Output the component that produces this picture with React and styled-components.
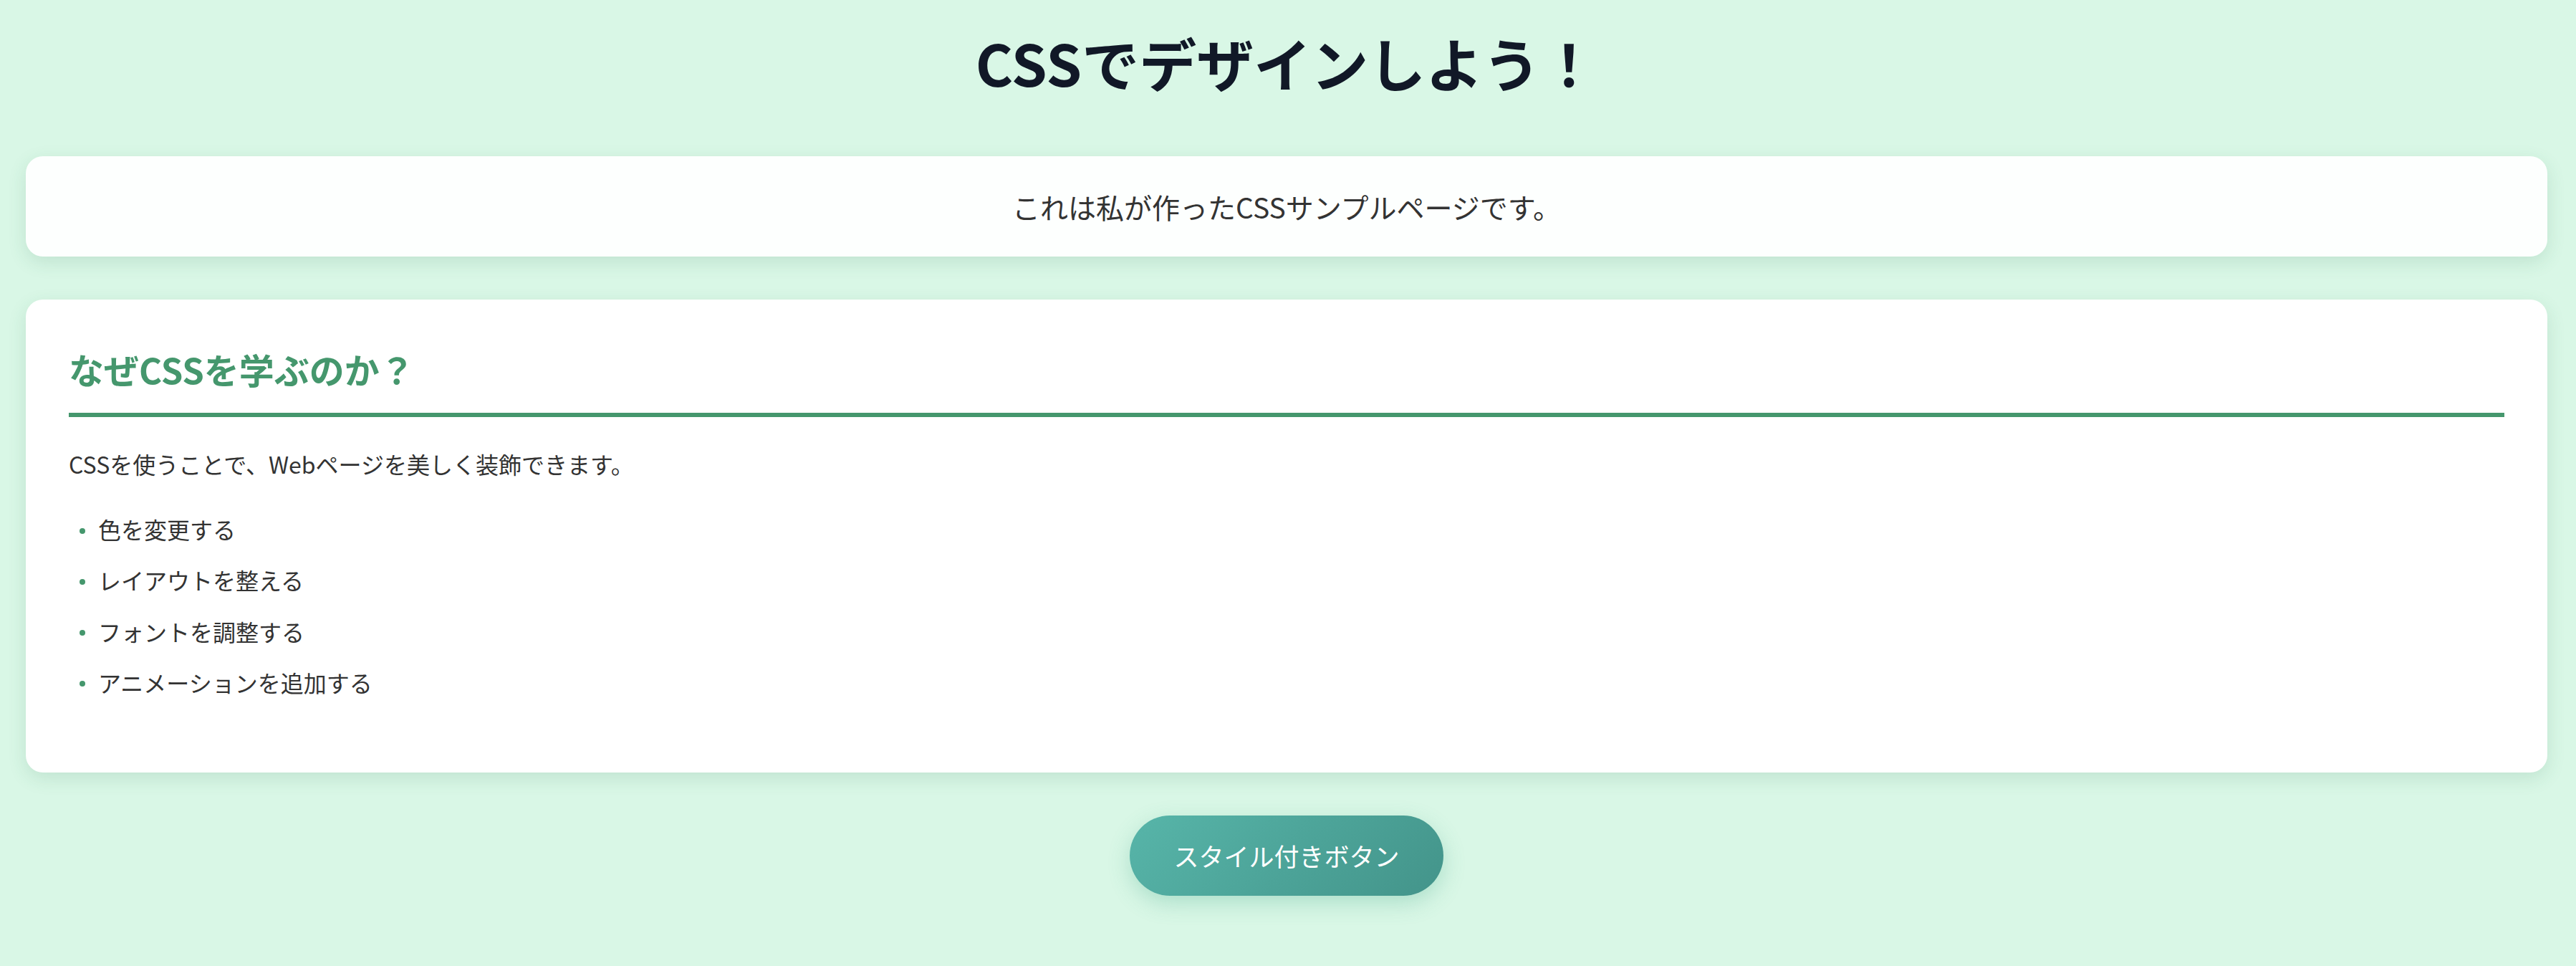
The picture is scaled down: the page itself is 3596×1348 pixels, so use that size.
import React from 'react';
import styled, { createGlobalStyle } from 'styled-components';

const GlobalStyle = createGlobalStyle`
  html, body {
    margin: 0;
    padding: 0;
    background: #d9f7e6;
  }

  body {
    font-family: "Noto Sans CJK JP", "Noto Sans", sans-serif;
    color: #333333;
  }
`;

const Page = styled.div`
  min-height: 1348px;
  box-sizing: border-box;
  padding: 38px 40px 60px 36px;
  display: flex;
  flex-direction: column;
  align-items: stretch;
`;

const Title = styled.h1`
  margin: 0 0 84px;
  text-align: center;
  font-size: 80px;
  line-height: 1.2;
  font-weight: 700;
  color: #111827;
`;

const Card = styled.section`
  background: ${({ $soft }) => ($soft ? 'rgba(255, 255, 255, 0.94)' : '#ffffff')};
  border-radius: 24px;
  box-shadow: 0 8px 26px rgba(40, 110, 80, 0.14);
  padding: ${({ $pad }) => $pad};
  margin-bottom: 60px;
`;

const Intro = styled.p`
  margin: 0;
  text-align: center;
  font-size: 39px;
  line-height: 1.6;
  color: #333333;
`;

const Heading = styled.h2`
  margin: 0;
  padding-bottom: 26px;
  border-bottom: 6px solid #45976d;
  font-size: 49px;
  line-height: 1.4;
  font-weight: 700;
  color: #45976d;
`;

const Text = styled.p`
  margin: 40px 0 0;
  font-size: 32px;
  line-height: 1.6;
  color: #333333;
`;

const List = styled.ul`
  list-style: none;
  margin: 40px 0 40px;
  padding: 0 0 0 41px;
  display: flex;
  flex-direction: column;
  gap: 20px;
`;

const Item = styled.li`
  position: relative;
  font-size: 32px;
  line-height: 1.6;
  color: #333333;

  &::before {
    content: '';
    position: absolute;
    left: -26px;
    top: 50%;
    width: 8px;
    height: 8px;
    margin-top: -2px;
    border-radius: 50%;
    background: #45976d;
  }
`;

const ButtonRow = styled.div`
  display: flex;
  justify-content: center;
`;

const StyledButton = styled.button`
  border: none;
  cursor: pointer;
  padding: 28px 61px;
  border-radius: 60px;
  background: linear-gradient(135deg, #57b5a9 0%, #43948a 100%);
  color: #ffffff;
  font-family: "Noto Sans CJK JP", "Noto Sans", sans-serif;
  font-size: 35px;
  line-height: 1.6;
  box-shadow: 0 10px 30px rgba(70, 170, 140, 0.3);
`;

const items = ['色を変更する', 'レイアウトを整える', 'フォントを調整する', 'アニメーションを追加する'];

export default function App() {
  return (
    <>
      <GlobalStyle />
      <Page>
        <Title>CSSでデザインしよう！</Title>

        <Card $soft $pad="39px 60px">
          <Intro>これは私が作ったCSSサンプルページです。</Intro>
        </Card>

        <Card $pad="63px 60px 60px">
          <Heading>なぜCSSを学ぶのか？</Heading>
          <Text>CSSを使うことで、Webページを美しく装飾できます。</Text>
          <List>
            {items.map((item) => (
              <Item key={item}>{item}</Item>
            ))}
          </List>
        </Card>

        <ButtonRow>
          <StyledButton>スタイル付きボタン</StyledButton>
        </ButtonRow>
      </Page>
    </>
  );
}
